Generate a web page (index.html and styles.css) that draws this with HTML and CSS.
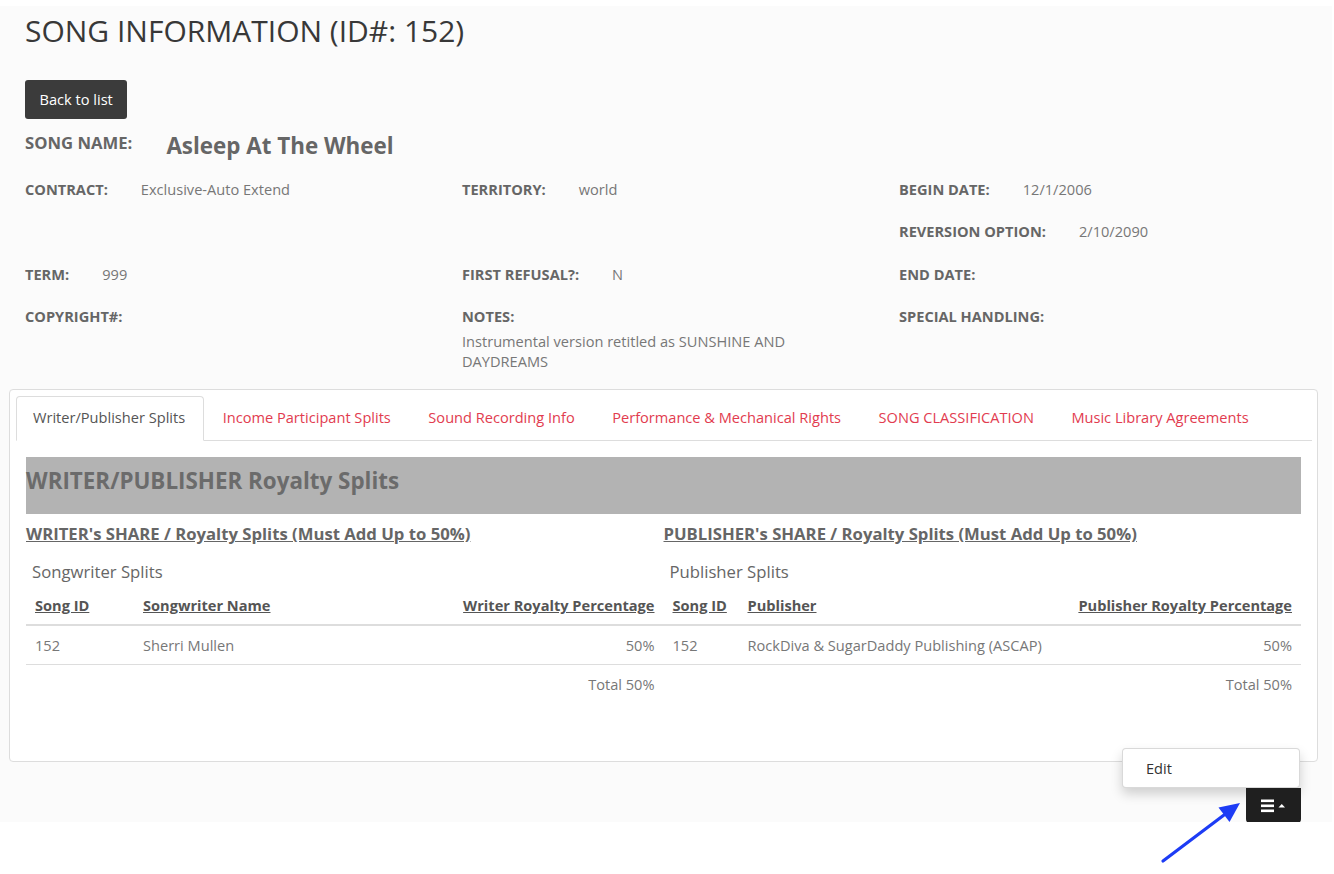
FILE: index.html
```html
<!DOCTYPE html>
<html lang="en">
<head>
    <meta charset="UTF-8">
    <meta name="viewport" content="width=device-width, initial-scale=1.0">
    <title>Song Information</title>
    <link rel="stylesheet" href="styles.css">
</head>
<body>
    <div class="page">
        <div class="header">
            <h1 class="page-title">SONG INFORMATION (ID#: 152)</h1>
            <button class="btn-back">Back to list</button>
            <div class="song-name">
                <span class="label">SONG NAME:</span>
                <span class="song-title">Asleep At The Wheel</span>
            </div>
            <div class="info-grid">
                <div class="info-item"><span class="label">CONTRACT:</span><span class="value">Exclusive-Auto Extend</span></div>
                <div class="info-item"><span class="label">TERRITORY:</span><span class="value">world</span></div>
                <div class="info-item"><span class="label">BEGIN DATE:</span><span class="value">12/1/2006</span></div>

                <div class="info-item"></div>
                <div class="info-item"></div>
                <div class="info-item"><span class="label">REVERSION OPTION:</span><span class="value">2/10/2090</span></div>

                <div class="info-item"><span class="label">TERM:</span><span class="value">999</span></div>
                <div class="info-item"><span class="label">FIRST REFUSAL?:</span><span class="value">N</span></div>
                <div class="info-item"><span class="label">END DATE:</span></div>

                <div class="info-item"><span class="label">COPYRIGHT#:</span></div>
                <div class="info-item stacked">
                    <span class="label">NOTES:</span>
                    <p class="notes">Instrumental version retitled as SUNSHINE AND DAYDREAMS</p>
                </div>
                <div class="info-item"><span class="label">SPECIAL HANDLING:</span></div>
            </div>
        </div>

        <div class="card">
            <ul class="tabs">
                <li class="tab active">Writer/Publisher Splits</li>
                <li class="tab">Income Participant Splits</li>
                <li class="tab">Sound Recording Info</li>
                <li class="tab">Performance &amp; Mechanical Rights</li>
                <li class="tab">SONG CLASSIFICATION</li>
                <li class="tab">Music Library Agreements</li>
            </ul>
            <div class="tab-content">
                <h2 class="section-title">WRITER/PUBLISHER Royalty Splits</h2>
                <div class="splits">
                    <div class="split-col">
                        <h3 class="share-title">WRITER's SHARE / Royalty Splits (Must Add Up to 50%)</h3>
                        <div class="split-caption">Songwriter Splits</div>
                        <table class="split-table writers">
                            <thead>
                                <tr>
                                    <th class="col-id">Song ID</th>
                                    <th>Songwriter Name</th>
                                    <th class="col-pct">Writer Royalty Percentage</th>
                                </tr>
                            </thead>
                            <tbody>
                                <tr>
                                    <td>152</td>
                                    <td>Sherri Mullen</td>
                                    <td class="col-pct">50%</td>
                                </tr>
                                <tr class="total-row">
                                    <td></td>
                                    <td></td>
                                    <td class="col-pct">Total 50%</td>
                                </tr>
                            </tbody>
                        </table>
                    </div>
                    <div class="split-col">
                        <h3 class="share-title">PUBLISHER's SHARE / Royalty Splits (Must Add Up to 50%)</h3>
                        <div class="split-caption">Publisher Splits</div>
                        <table class="split-table publishers">
                            <thead>
                                <tr>
                                    <th class="col-id">Song ID</th>
                                    <th>Publisher</th>
                                    <th class="col-pct">Publisher Royalty Percentage</th>
                                </tr>
                            </thead>
                            <tbody>
                                <tr>
                                    <td>152</td>
                                    <td>RockDiva &amp; SugarDaddy Publishing (ASCAP)</td>
                                    <td class="col-pct">50%</td>
                                </tr>
                                <tr class="total-row">
                                    <td></td>
                                    <td></td>
                                    <td class="col-pct">Total 50%</td>
                                </tr>
                            </tbody>
                        </table>
                    </div>
                </div>
            </div>
        </div>

        <div class="action-menu">
            <ul class="dropdown">
                <li>Edit</li>
            </ul>
            <button class="btn-menu">
                <svg width="26" height="14" viewBox="0 0 26 14">
                    <rect x="0" y="0.5" width="13" height="2.6" fill="#fff"/>
                    <rect x="0" y="5.5" width="13" height="2.6" fill="#fff"/>
                    <rect x="0" y="10.5" width="13" height="2.6" fill="#fff"/>
                    <polygon points="17.5,8.5 24,8.5 20.75,5" fill="#fff"/>
                </svg>
            </button>
        </div>
    </div>

    <!-- annotation arrow -->
    <svg class="arrow" width="100" height="80" viewBox="0 0 100 80">
        <line x1="13" y1="71" x2="76" y2="23.5" stroke="#1d3cf5" stroke-width="3.2" stroke-linecap="round"/>
        <polygon points="90,13 79.5,32 68.5,17.5" fill="#1d3cf5"/>
    </svg>
</body>
</html>
```

FILE: styles.css
```css
body {
    margin: 0;
    background: #fff;
    font-family: "Open Sans", Arial, sans-serif;
    font-size: 14.6px;
    line-height: 20px;
    color: #777;
}

.page {
    position: relative;
    margin-top: 6px;
    width: 1332px;
    height: 816px;
    background: #fbfbfb;
}

.header {
    padding: 8px 0 0 25px;
}

.page-title {
    margin: 0;
    font-size: 30px;
    line-height: 34px;
    font-weight: 400;
    color: #383838;
}

.btn-back {
    display: block;
    margin-top: 32px;
    padding: 9px 14.5px;
    border: 0;
    border-radius: 3px;
    background: #3b3b3b;
    color: #fff;
    font-family: inherit;
    font-size: 14.6px;
    line-height: 21px;
}

.label {
    font-weight: 700;
    color: #666;
}

.song-name {
    display: flex;
    align-items: flex-start;
    gap: 34px;
    margin-top: 11px;
}

.song-name .label {
    padding-top: 3px;
    font-size: 16.7px;
}

.song-title {
    font-size: 22.4px;
    line-height: 30px;
    padding-top: 1px;
    font-weight: 700;
    color: #666;
}

.info-grid {
    display: grid;
    grid-template-columns: repeat(3, 437px);
    margin-top: 7px;
}

.info-item {
    display: flex;
    gap: 33px;
    padding: 11px 0 11.33px;
    min-height: 20px;
}

.info-item.stacked {
    flex-direction: column;
    gap: 5px;
}

.notes {
    margin: 0;
    max-width: 340px;
}

.card {
    margin: 7px 0 0 9px;
    width: 1296px;
    padding: 6px 5px 58px 6px;
    border: 1px solid #ddd;
    border-radius: 4px;
    background: #fff;
}

.tabs {
    display: flex;
    margin: 0;
    padding: 0;
    list-style: none;
    border-bottom: 1px solid #ddd;
}

.tab {
    margin: 0 2px -1px 0;
    padding: 10px 17.5px 13px 16px;
    border: 1px solid transparent;
    border-radius: 4px 4px 0 0;
    color: #e23c4f;
    white-space: nowrap;
}

.tab.active {
    border-color: #ddd #ddd transparent;
    background: #fff;
    color: #555;
}

.tab-content {
    padding: 16px 11px 0 10px;
}

.section-title {
    margin: 0;
    height: 57px;
    line-height: 48px;
    background: #b3b3b3;
    font-size: 22.4px;
    font-weight: 700;
    color: #6b6b6b;
}

.splits {
    display: grid;
    grid-template-columns: 1fr 1fr;
}

.share-title {
    margin: 10px 0 0;
    font-size: 16.7px;
    line-height: 20px;
    font-weight: 700;
    color: #666;
    text-decoration: underline;
}

.split-caption {
    margin-top: 17px;
    padding-left: 6px;
    font-size: 16.7px;
    line-height: 22px;
    color: #666;
}

.split-table {
    width: 100%;
    margin-top: 3px;
    border-collapse: collapse;
}

.split-table th,
.split-table td {
    padding: 8px 9px;
    line-height: 22px;
    text-align: left;
    white-space: nowrap;
}

.split-table th {
    color: #555;
    font-weight: 700;
    text-decoration: underline;
    border-bottom: 2px solid #ddd;
}

.split-table td {
    border-top: 1px solid #ddd;
}

.split-table .col-pct {
    text-align: right;
}

.writers .col-id {
    width: 90px;
}

.publishers .col-id {
    width: 57px;
}

.action-menu {
    position: absolute;
    left: 1122px;
    top: 742px;
    width: 179px;
}

.dropdown {
    margin: 0;
    padding: 9px 0;
    list-style: none;
    width: 176px;
    background: #fff;
    border: 1px solid rgba(0, 0, 0, .15);
    border-radius: 4px;
    box-shadow: 0 6px 12px rgba(0, 0, 0, .175);
    color: #333;
}

.dropdown li {
    padding: 0 23px;
    line-height: 20px;
}

.btn-menu {
    display: flex;
    align-items: center;
    justify-content: center;
    margin-left: 124px;
    width: 55px;
    height: 35px;
    padding: 0;
    border: 0;
    border-radius: 0 0 4px 4px;
    background: #1f1f1f;
}

.arrow {
    position: absolute;
    left: 1150px;
    top: 790px;
}
```
